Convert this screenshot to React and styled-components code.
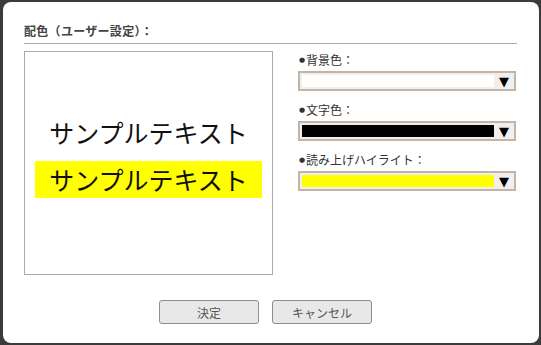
import React from 'react';
import styled, { createGlobalStyle } from 'styled-components';

const GlobalStyle = createGlobalStyle`
  html, body {
    margin: 0;
    padding: 0;
    background: #3b3b3b;
    font-family: "Noto Sans CJK JP", "Liberation Sans", sans-serif;
  }
`;

const colorOptions = [
  { label: '背景色：', color: '#ffffff' },
  { label: '文字色：', color: '#000000' },
  { label: '読み上げハイライト：', color: '#ffff00' },
];

const App = () => {
  return (
    <>
      <GlobalStyle />
      <Dialog>
        <Title>配色（ユーザー設定）：</Title>
        <Body>
          <Preview>
            <SampleText>サンプルテキスト</SampleText>
            <SampleText highlight>サンプルテキスト</SampleText>
          </Preview>
          <Settings>
            {colorOptions.map((opt) => (
              <Field key={opt.label}>
                <Label>
                  <Bullet>●</Bullet>
                  {opt.label}
                </Label>
                <ColorSelect>
                  <Swatch color={opt.color} />
                  <Arrow>▼</Arrow>
                </ColorSelect>
              </Field>
            ))}
          </Settings>
        </Body>
        <Actions>
          <Button>決定</Button>
          <Button>キャンセル</Button>
        </Actions>
      </Dialog>
    </>
  );
};

// Styled Components

const Dialog = styled.div`
  box-sizing: border-box;
  width: 536px;
  margin: 2px 0 0 3px;
  padding: 21px 21px 19px 21px;
  background: #fff;
  border-radius: 8px;
`;

const Title = styled.div`
  font-size: 12px;
  font-weight: bold;
  line-height: 16px;
  color: #444;
  padding: 0 0 4px 0;
  border-bottom: 1px solid #a8a8a8;
  margin-right: 1px;
  letter-spacing: 0.3px;
`;

const Body = styled.div`
  display: flex;
  gap: 25px;
  margin-top: 7px;
`;

const Preview = styled.div`
  box-sizing: border-box;
  width: 249px;
  height: 224px;
  border: 1px solid #aaa;
  display: flex;
  flex-direction: column;
  align-items: center;
  padding-top: 62px;
  gap: 10px;
`;

const SampleText = styled.div`
  font-size: 25px;
  line-height: 37px;
  color: #111;
  padding: 0 14px;
  background: ${(p) => (p.highlight ? '#ffff00' : 'transparent')};
`;

const Settings = styled.div`
  display: flex;
  flex-direction: column;
  padding-top: 1px;
`;

const Field = styled.div`
  display: flex;
  flex-direction: column;
  margin-bottom: 11px;
`;

const Label = styled.div`
  display: flex;
  align-items: center;
  font-size: 12px;
  line-height: 16px;
  color: #333;
  margin: 0 0 3px 1px;
`;

const Bullet = styled.span`
  font-family: "DejaVu Sans", sans-serif;
  font-size: 7px;
  margin-right: 1px;
`;

const ColorSelect = styled.div`
  box-sizing: border-box;
  width: 218px;
  height: 20px;
  display: flex;
  align-items: stretch;
  border: 2px solid #c2b4a6;
  background: #efefef;
`;

const Swatch = styled.div`
  flex: 1;
  margin: 2px 0 2px 2px;
  background: ${(p) => p.color};
`;

const Arrow = styled.div`
  width: 20px;
  display: flex;
  align-items: center;
  justify-content: center;
  font-size: 13px;
  line-height: 1;
  color: #000;
  font-family: "DejaVu Sans", sans-serif;
`;

const Actions = styled.div`
  display: flex;
  justify-content: center;
  gap: 13px;
  margin-top: 25px;
  padding-right: 11px;
`;

const Button = styled.button`
  box-sizing: border-box;
  width: 100px;
  height: 24px;
  padding: 0;
  background: #e8e8e8;
  border: 1px solid #8e8e8e;
  border-radius: 3px;
  color: #555;
  font-size: 12px;
  font-family: "Noto Sans CJK JP", "Liberation Sans", sans-serif;
  cursor: pointer;
`;

export default App;
